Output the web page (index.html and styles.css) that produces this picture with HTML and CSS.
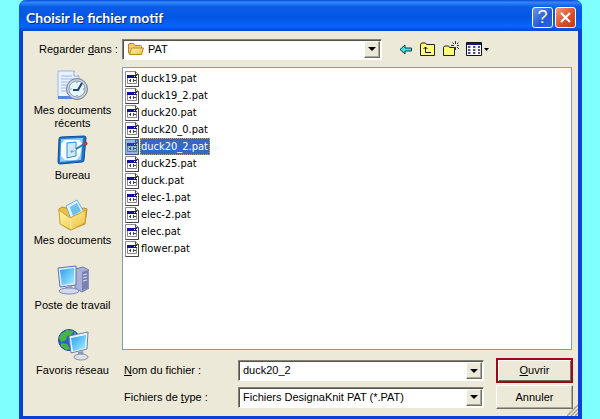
FILE: index.html
```html
<!DOCTYPE html>
<html lang="fr">
<head>
    <meta charset="UTF-8">
    <meta name="viewport" content="width=device-width, initial-scale=1.0">
    <title>Choisir le fichier motif</title>
    <link rel="stylesheet" href="styles.css">
</head>
<body>
    <svg class="defs" width="0" height="0">
      <linearGradient id="screen" x1="0" y1="0" x2="1" y2="1">
        <stop offset="0" stop-color="#2a9df0"/>
        <stop offset="1" stop-color="#a4f0ff"/>
      </linearGradient>
      <linearGradient id="folder" x1="0" y1="0" x2="1" y2="1">
        <stop offset="0" stop-color="#fff6a8"/>
        <stop offset="1" stop-color="#efc043"/>
      </linearGradient>
      <symbol id="pat" viewBox="0 0 14 16">
        <path d="M.5.5h10l3 3v12H.5z" fill="#fff" stroke="#8c8c80"/>
        <path d="M10.500.5v3h3M13.500 3.500v12H.5" fill="none" stroke="#444"/>
        <path d="M2.500 4.500h9v8h-9z" fill="#fff" stroke="#88888a"/>
        <path d="M2 4h10v3H2z" fill="#10109a"/>
        <path d="M9 5h1v1H9zM11 5h1v1h-1z" fill="#fff"/>
        <path d="M4 9h1v1H4zM5 8h1v3H5zM8 8h1v3H8zM9 9h2v1H9z" fill="#444"/>
      </symbol>
    </svg>

    <div class="dialog">
      <div class="title-bar">
        <h1>Choisir le fichier motif</h1>
        <button class="help" aria-label="Aide">?</button>
        <button class="close" aria-label="Fermer">
          <svg width="13" height="13" viewBox="0 0 13 13"><path d="M2 2l9 9M11 2l-9 9" stroke="#fff" stroke-width="2.2"/></svg>
        </button>
      </div>

      <div class="content">
        <div class="look-in">
          <label for="folder-select">Regarder <u>d</u>ans :</label>
          <div class="combo">
            <svg width="18" height="16" viewBox="0 0 18 16">
              <path d="M1.500 12V4q0-1.500 1.500-1.500h3.500l1.500 2h5.500q1 0 1 1v7z" fill="#f5cf63" stroke="#ad8421"/>
              <path d="M2.500 13.500l2-6.500h12l-2 6.500z" fill="url(#folder)" stroke="#b88a20"/>
            </svg>
            <select id="folder-select"><option>PAT</option></select>
            <span class="arrow"></span>
          </div>
          <div class="tools">
            <button aria-label="Retour">
              <svg width="14" height="11" viewBox="0 0 14 11"><path d="M1 5.500l5-4.500v3h6.500v3H6v3z" fill="#38e4e4" stroke="#123a48"/></svg>
            </button>
            <button aria-label="Dossier parent">
              <svg width="16" height="14" viewBox="0 0 16 14">
                <path d="M.5 13.500v-11l1-1.500h4l1 1.500h8v11z" fill="#ffff78" stroke="#222"/>
                <path d="M5.500 5v5.500H11M3.500 7l2-2 2 2" fill="none" stroke="#111"/>
              </svg>
            </button>
            <button aria-label="Nouveau dossier">
              <svg width="16" height="16" viewBox="0 0 16 16">
                <path d="M.5 14.500v-8l1-1.500h4l1 1.500h5v8z" fill="#ffff78" stroke="#222"/>
                <path d="M12.500 0v3M12.500 6v3M8 4.500h3M14 4.500h2M9.500 1.500l1.500 1.500M15.500 1.500L14 3M14 6l2 2" stroke="#333"/>
              </svg>
            </button>
            <button aria-label="Affichage">
              <svg width="23" height="14" viewBox="0 0 23 14">
                <path d="M.5.500h15v13H.5z" fill="#fff" stroke="#111"/>
                <path d="M1 1h14v2H1z" fill="#16168c"/>
                <path d="M2 5h2M7 5h2M12 5h2M2 8h2M7 8h2M12 8h2M2 11h2M7 11h2M12 11h2" stroke="#16168c" stroke-width="1.500"/>
                <path d="M4 5h1M9 5h1M4 8h1M9 8h1M4 11h1M9 11h1" stroke="#777"/>
                <path d="M18 6h5l-2.500 3z"/>
              </svg>
            </button>
          </div>
        </div>

        <nav class="places">
          <button>
            <svg width="32" height="32" viewBox="0 0 32 32">
              <path d="M1 2h16l5 5v22H1z" fill="#e8f1ff" stroke="#9cb6e6"/>
              <path d="M17 2v5h5" fill="#fff" stroke="#89a6da"/>
              <path d="M4 7h11M4 10h15M4 13h11M4 16h8M4 19h7M4 22h6" stroke="#9db9ef"/>
              <path d="M1 27h20v3H1z" fill="#5588df"/>
              <circle cx="20" cy="20" r="10.500" fill="#c6cfda" stroke="#76828f"/>
              <circle cx="20" cy="20" r="8" fill="#e5f8ff" stroke="#8ba3b5"/>
              <path d="M25 14l-4 7h-5" fill="none" stroke="#254472" stroke-width="2"/>
              <path d="M20 13v1M13.500 20h1M20 26v1M26 20h1" stroke="#4c6c92"/>
            </svg>
            <span>Mes documents récents</span>
          </button>
          <button>
            <svg width="32" height="32" viewBox="0 0 32 32">
              <path d="M4 3l23-1q2 0 2 2l-2 22q0 2-2 2l-22 2q-2 0-2-2L2 5q0-2 2-2z" fill="#1f72c8" stroke="#0c4f9a"/>
              <path d="M4 5l22-1-2 22-21 2z" fill="#8fd0fb"/>
              <path d="M8 6h14l3 3-2 13-4 4H8l-4-4V10z" fill="#f6fbff"/>
              <path d="M10 9l9-1v14l-9 2z" fill="#cceafe" stroke="#3689d1"/>
              <path d="M14 18l10-6 3-2" stroke="#2577bb" stroke-width="2"/>
              <path d="M14 18l4-4 1 2z" fill="#fff"/>
              <circle cx="28.500" cy="9.500" r="2" fill="#bd3f20"/>
            </svg>
            <span>Bureau</span>
          </button>
          <button>
            <svg width="32" height="32" viewBox="0 0 32 32">
              <path d="M2 10l3-2 4 1 4 3 14-3 3 1-2 15-15 6-9-6z" fill="#eebf43" stroke="#be8e24"/>
              <path d="M9 7L20 1l7 12-12 10z" fill="#d8f3ff" stroke="#6eaed3"/>
              <path d="M13 8l7-4 4 8-8 5z" fill="#6fc1ec"/>
              <path d="M2 11l11 8 16-8-1 13-14 7-11-6z" fill="url(#folder)" stroke="#d0a12f"/>
              <path d="M13 19l1 11" stroke="#fff2a2"/>
            </svg>
            <span>Mes documents</span>
          </button>
          <button>
            <svg width="32" height="32" viewBox="0 0 32 32">
              <path d="M18 5l8-2 6 3v18l-7 4-7-4z" fill="#a9afd5" stroke="#7279a9"/>
              <path d="M25 8l6-2v18l-6 3z" fill="#7982b5"/>
              <path d="M26 11l4-1M26 14l4-1M26 17l4-1" stroke="#dce2ff"/>
              <path d="M1 4l18-2v19L3 23z" fill="#e1eaff" stroke="#5c72b8"/>
              <path d="M3 6l14-2v15L5 21z" fill="url(#screen)"/>
              <path d="M8 22h7l2 4H8z" fill="#9aa4cd"/>
              <ellipse cx="12" cy="27" rx="10" ry="3" fill="#d4d8ed" stroke="#818ab7"/>
            </svg>
            <span>Poste de travail</span>
          </button>
          <button>
            <svg width="32" height="32" viewBox="0 0 32 32">
              <circle cx="12" cy="11" r="10.500" fill="#2864c9" stroke="#234b98"/>
              <path d="M4 5l6-4 7 1-3 4-4 1-1 4-5 2-2-4zM4 14l6 1 3 5-4 1-5-4zM17 3l5 4-4 2z" fill="#49b642"/>
              <path d="M12 7l19-4-1 17-16 4z" fill="#edf4ff" stroke="#6e7da6"/>
              <path d="M14 9l15-3-1 13-12 3z" fill="url(#screen)"/>
              <path d="M21 23l5-1 1 5h-6z" fill="#8e98b6"/>
              <ellipse cx="24" cy="28" rx="7" ry="3" fill="#dde1ed" stroke="#8790ae"/>
            </svg>
            <span>Favoris réseau</span>
          </button>
        </nav>

        <ul class="files">
          <li><svg><use href="#pat"/></svg><span>duck19.pat</span></li>
          <li><svg><use href="#pat"/></svg><span>duck19_2.pat</span></li>
          <li><svg><use href="#pat"/></svg><span>duck20.pat</span></li>
          <li><svg><use href="#pat"/></svg><span>duck20_0.pat</span></li>
          <li class="selected"><svg><use href="#pat"/></svg><span>duck20_2.pat</span></li>
          <li><svg><use href="#pat"/></svg><span>duck25.pat</span></li>
          <li><svg><use href="#pat"/></svg><span>duck.pat</span></li>
          <li><svg><use href="#pat"/></svg><span>elec-1.pat</span></li>
          <li><svg><use href="#pat"/></svg><span>elec-2.pat</span></li>
          <li><svg><use href="#pat"/></svg><span>elec.pat</span></li>
          <li><svg><use href="#pat"/></svg><span>flower.pat</span></li>
        </ul>

        <form class="fields" onsubmit="return false">
          <label for="file-name"><u>N</u>om du fichier :</label>
          <div class="combo">
            <input id="file-name" type="text" value="duck20_2">
            <button type="button" class="arrow" aria-label="Fichiers récents"></button>
          </div>
          <button class="push default"><u>O</u>uvrir</button>
          <label for="file-type">Fichiers de <u>t</u>ype :</label>
          <div class="combo">
            <select id="file-type"><option>Fichiers DesignaKnit PAT (*.PAT)</option></select>
            <span class="arrow"></span>
          </div>
          <button type="button" class="push">Annuler</button>
        </form>
        <svg class="grip" width="11" height="11" viewBox="0 0 11 11">
          <path d="M0 11L11 0M4 11l7-7M8 11l3-3" stroke="#a5a08d" stroke-width="1.500"/>
        </svg>
      </div>
    </div>
</body>
</html>
```
FILE: styles.css
```css
*{
  box-sizing: border-box;
}

body{
  margin: 0;
  background-color: #80ffff;
  font: 11px/13px "Liberation Sans", Arial, sans-serif;
  color: black;
}

button, input, select{
  margin: 0;
  padding: 0;
  border: 0;
  background: none;
  font: inherit;
  color: inherit;
}

.defs{
  position: absolute;
}

.dialog{
  display: flex;
  flex-direction: column;
  min-height: 100vh;
  margin: 0 18px 0 19px;
  border: 4px solid #0a3fd8;
  border-top: 0;
  border-bottom-width: 3px;
  border-radius: 7px 7px 0 0;
  background-color: #ece9d8;
}

/* title bar */
.title-bar{
  display: flex;
  align-items: center;
  gap: 2px;
  height: 31px;
  margin: 0 -4px;
  padding: 4px 6px 0 7px;
  border-radius: 7px 7px 0 0;
  background: linear-gradient(#0a50d8 0, #2f86f6 8%, #0a5ce8 22%, #0355e4 55%, #0566fb 85%, #0346cd 100%);
}

.title-bar h1{
  flex: 1;
  margin: 0;
  font: bold 14px/18px Lato, "Trebuchet MS", sans-serif;
  color: white;
  text-shadow: 1px 1px #0a2a80;
}

.title-bar button{
  display: flex;
  align-items: center;
  justify-content: center;
  width: 21px;
  height: 21px;
  border: 1px solid white;
  border-radius: 3px;
  color: white;
}

.title-bar .help{
  background: linear-gradient(135deg, #6b94f0, #2458d8 60%, #2a62e4);
  font-size: 18px;
  line-height: 19px;
}

.close{
  background: linear-gradient(135deg, #f09a80, #dc4a24 60%, #c83c14);
}

/* content */
.content{
  flex: 1;
  display: grid;
  grid-template-columns: 99px 1fr;
  grid-template-rows: 36px 1fr auto;
  position: relative;
  padding-right: 5px;
}

.look-in{
  grid-column: 1 / 3;
  display: flex;
  align-items: center;
}

.look-in label{
  width: 99px;
  padding-left: 16px;
  white-space: nowrap;
}

.look-in .combo{
  flex: 0 1 260px;
}

.combo{
  display: flex;
  align-items: center;
  height: 21px;
  padding: 1px;
  border: 1px solid;
  border-color: #848274 white white #848274;
  background-color: white;
  box-shadow: inset 1px 1px #55544c;
}

.combo svg{
  margin-left: 3px;
}

.combo select, .combo input{
  flex: 1;
  min-width: 0;
  padding-left: 3px;
  appearance: none;
  outline: 0;
}

.arrow{
  display: flex;
  align-items: center;
  justify-content: center;
  width: 16px;
  height: 17px;
  border: 1px solid;
  border-color: white #716f64 #716f64 white;
  box-shadow: inset -1px -1px #aca899;
  background-color: #ece9d8;
}

.combo .arrow{
  background-color: #ece9d8;
}

.arrow::after{
  content: "";
  border: 4px solid transparent;
  border-top-color: black;
  border-bottom: 0;
}

.tools{
  display: flex;
  align-items: center;
  gap: 7px;
  margin-left: 17px;
}

.tools button, .tools svg{
  display: block;
}

.places{
  grid-row: 2 / 4;
  padding-top: 2px;
}

.places button{
  display: flex;
  flex-direction: column;
  align-items: center;
  gap: 3px;
  width: 100%;
  height: 65px;
}

.places svg{
  flex: none;
}

.places span{
  max-width: 84px;
}

.files{
  margin: 0 1px 0 0;
  padding: 2px 2px 1px;
  border: 1px solid #7f9db9;
  background-color: white;
  list-style: none;
  font: 11px/17px "DejaVu Sans Condensed", Tahoma, sans-serif;
}

.files li{
  display: flex;
  align-items: center;
  height: 17px;
}

.files svg{
  width: 14px;
  height: 16px;
}

.files span{
  margin-left: 1px;
  padding: 0 2px 0 1px;
}

.selected span{
  background-color: #316ac5;
  color: white;
  outline: 1px dotted #d0a060;
  outline-offset: -1px;
}

.selected svg{
  background-color: #316ac5;
}

.selected use{
  opacity: 0.5;
}

/* name, type and buttons */
.fields{
  display: grid;
  grid-template-columns: 116px 1fr 77px;
  grid-template-rows: 25px 24px;
  row-gap: 2px;
  align-items: center;
  padding: 8px 0 7px;
}

.fields label{
  padding-left: 2px;
}

.fields .combo{
  margin-right: 12px;
}

.push{
  height: 24px;
  border: 1px solid;
  border-color: white #716f64 #716f64 white;
  box-shadow: inset -1px -1px #aca899;
  background-color: #ece9d8;
}

.default{
  height: 25px;
  border: 2px solid #a00818;
  box-shadow: inset 1px 1px white, inset -1px -1px #716f64;
}

.grip{
  position: absolute;
  right: 0;
  bottom: 0;
}
```
